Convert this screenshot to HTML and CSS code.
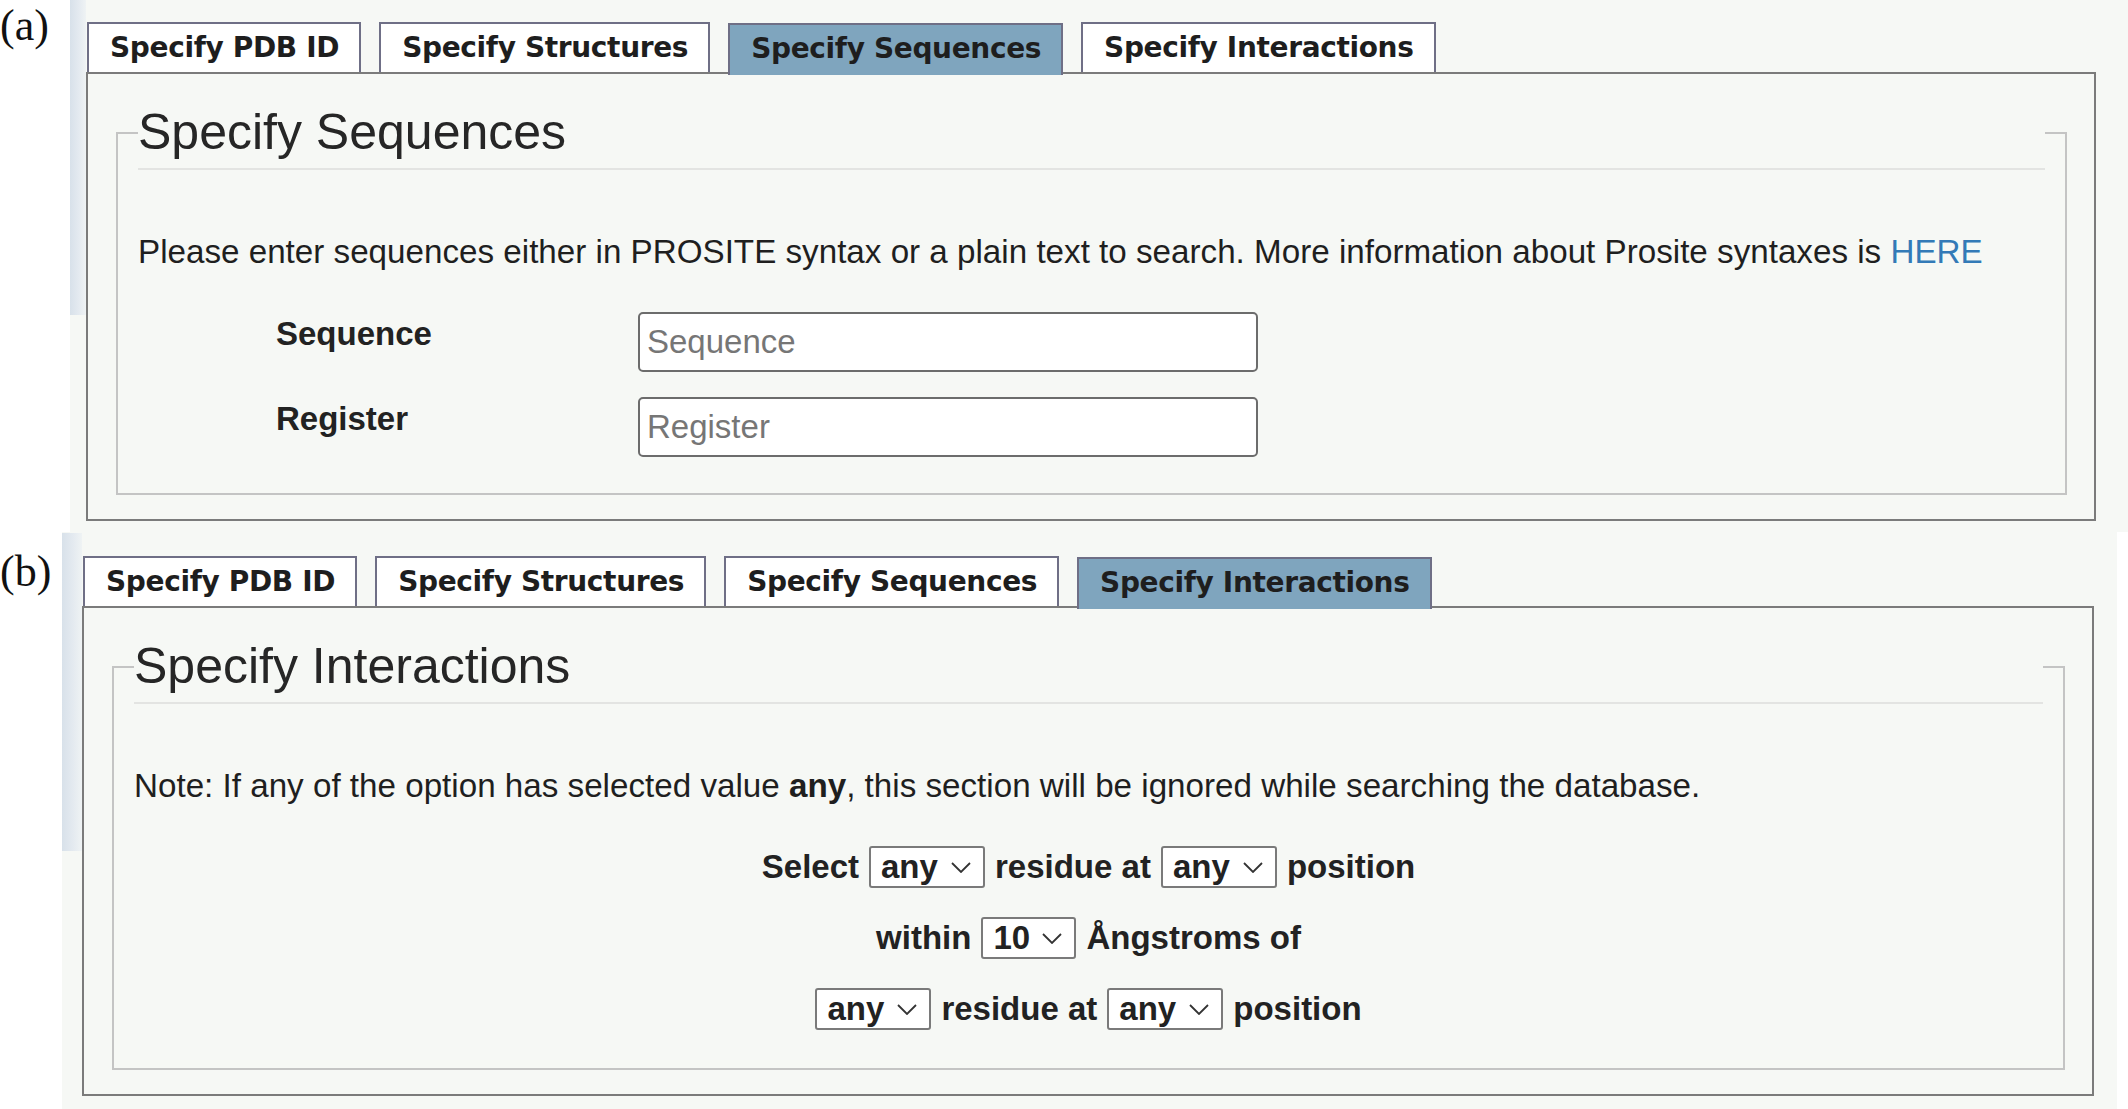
FILE: index.html
```html
<!DOCTYPE html>
<html lang="en">
<head>
<meta charset="utf-8">
<title>Specify Sequences / Specify Interactions</title>
<link rel="stylesheet" href="styles.css">
</head>
<body>
<div class="figure">
  <section class="fig-row fig-a">
    <div class="fig-label">(a)</div>
    <div class="shot">
      <div class="strip"></div>
      <div class="app">
        <ul class="tabs">
          <li class="tab">Specify PDB ID</li>
          <li class="tab">Specify Structures</li>
          <li class="tab active">Specify Sequences</li>
          <li class="tab">Specify Interactions</li>
        </ul>
        <div class="panel">
          <fieldset>
            <legend>Specify Sequences</legend>
            <p class="intro">Please enter sequences either in PROSITE syntax or a plain text to search. More information about Prosite syntaxes is <a href="#">HERE</a></p>
            <div class="form-grid">
              <label class="flabel" for="seq">Sequence</label>
              <input class="finput" id="seq" type="text" placeholder="Sequence">
              <label class="flabel" for="reg">Register</label>
              <input class="finput" id="reg" type="text" placeholder="Register">
            </div>
          </fieldset>
        </div>
      </div>
    </div>
  </section>

  <section class="fig-row fig-b">
    <div class="fig-label">(b)</div>
    <div class="shot">
      <div class="strip"></div>
      <div class="app">
        <ul class="tabs">
          <li class="tab">Specify PDB ID</li>
          <li class="tab">Specify Structures</li>
          <li class="tab">Specify Sequences</li>
          <li class="tab active">Specify Interactions</li>
        </ul>
        <div class="panel">
          <fieldset>
            <legend>Specify Interactions</legend>
            <p class="intro">Note: If any of the option has selected value <b>any</b>, this section will be ignored while searching the database.</p>
            <div class="irows">
              <div class="irow">
                <span>Select</span>
                <span class="sel"><select class="w-any"><option>any</option><option>ALA</option><option>ARG</option><option>ASN</option><option>ASP</option><option>CYS</option></select><svg class="chev" viewBox="0 0 20 11"><path d="M1 1 L10 10 L19 1"/></svg></span>
                <span>residue at</span>
                <span class="sel"><select class="w-any"><option>any</option><option>1</option><option>2</option><option>3</option></select><svg class="chev" viewBox="0 0 20 11"><path d="M1 1 L10 10 L19 1"/></svg></span>
                <span>position</span>
              </div>
              <div class="irow">
                <span>within</span>
                <span class="sel"><select class="w-num"><option>10</option><option>5</option><option>8</option><option>12</option></select><svg class="chev" viewBox="0 0 20 11"><path d="M1 1 L10 10 L19 1"/></svg></span>
                <span>Ångstroms of</span>
              </div>
              <div class="irow">
                <span class="sel"><select class="w-any"><option>any</option><option>ALA</option><option>ARG</option><option>ASN</option><option>ASP</option><option>CYS</option></select><svg class="chev" viewBox="0 0 20 11"><path d="M1 1 L10 10 L19 1"/></svg></span>
                <span>residue at</span>
                <span class="sel"><select class="w-any"><option>any</option><option>1</option><option>2</option><option>3</option></select><svg class="chev" viewBox="0 0 20 11"><path d="M1 1 L10 10 L19 1"/></svg></span>
                <span>position</span>
              </div>
            </div>
          </fieldset>
        </div>
      </div>
    </div>
  </section>
</div>
</body>
</html>
```

FILE: styles.css
```css
* { box-sizing: border-box; }

html, body {
  margin: 0;
  padding: 0;
  background: #ffffff;
}

body {
  width: 2128px;
  height: 1109px;
  overflow: hidden;
  font-family: "Liberation Sans", Arial, sans-serif;
  color: #222;
}

.figure {
  display: flex;
  flex-direction: column;
}

.fig-row {
  display: flex;
  align-items: flex-start;
}

.fig-a { height: 532px; }
.fig-b { height: 577px; }

.fig-label {
  font-family: "Liberation Serif", "Times New Roman", serif;
  font-size: 44px;
  line-height: 44px;
  color: #111;
  flex: none;
}

.fig-a .fig-label { width: 70px; padding-top: 4px; }
.fig-b .fig-label { width: 62px; padding-top: 18px; }

.shot {
  display: flex;
  align-items: flex-start;
  background: #f6f8f5;
  height: 100%;
}

.fig-a .shot { width: 2058px; }
.fig-b .shot { width: 2055px; }

.strip {
  flex: none;
  background: linear-gradient(to right, #d8e1ea 0%, #e4eaf0 55%, #eff3f4 100%);
}

.fig-a .strip { width: 16px; height: 315px; }
.fig-b .strip { width: 20px; height: 318px; margin-top: 1px; }

.app { flex: none; }
.fig-a .app { width: 2010px; padding-top: 22px; }
.fig-b .app { width: 2012px; padding-top: 24px; }

/* Tabs */
.tabs {
  list-style: none;
  margin: 0 0 0 1px;
  padding: 0;
  display: flex;
  align-items: flex-end;
  gap: 18px;
  height: 50px;
}

.tab {
  height: 50px;
  padding: 0 20px 0 21px;
  border: 2px solid #6f6f86;
  border-bottom: 0;
  background: #ffffff;
  font-family: "DejaVu Sans", Verdana, sans-serif;
  font-weight: bold;
  font-size: 28px;
  letter-spacing: -0.35px;
  line-height: 48px;
  color: #1e1e1e;
  white-space: nowrap;
}

.tab.active {
  height: 52px;
  margin-bottom: -3px;
  background: #7fa5be;
  position: relative;
  z-index: 1;
}

/* Panel */
.panel {
  border: 2px solid #7b7b7b;
  padding: 22px 27px 24px 28px;
}

fieldset {
  margin: 0;
  min-width: 0;
  border: 2px solid #c4c4c4;
  padding: 0 20px 36px;
}

legend {
  display: block;
  width: 100%;
  padding: 0;
  margin: 0;
  font-size: 50px;
  line-height: 72px;
  color: #262626;
  border-bottom: 2px solid #e3e4e2;
}

.intro {
  margin: 58px 0 0;
  font-size: 33.2px;
  line-height: 47px;
  color: #1f1f1f;
}

.intro b { font-weight: bold; }

.intro a {
  color: #337ab7;
  text-decoration: none;
}

/* Form (a) */
.form-grid {
  margin-top: 37px;
  padding-left: 138px;
  display: grid;
  grid-template-columns: 362px 620px;
  row-gap: 25px;
}

.flabel {
  font-size: 33px;
  font-weight: bold;
  line-height: 43px;
  color: #222;
}

.finput {
  width: 620px;
  height: 60px;
  border: 2px solid #6c6c6c;
  border-radius: 5px;
  background: #ffffff;
  padding: 0 7px;
  font-family: "Liberation Sans", Arial, sans-serif;
  font-size: 33px;
  color: #222;
}

.finput::placeholder { color: #767676; }

/* Interaction rows (b) */
.irows {
  margin-top: 37px;
  display: flex;
  flex-direction: column;
  gap: 29px;
  padding-bottom: 2px;
}

.irow {
  display: flex;
  justify-content: center;
  align-items: center;
  gap: 10px;
  height: 42px;
  font-size: 33px;
  font-weight: bold;
  line-height: 42px;
  color: #222;
}

.sel {
  position: relative;
  display: inline-block;
  height: 42px;
}

.sel select {
  -webkit-appearance: none;
  appearance: none;
  height: 42px;
  border: 2px solid #7a7a7a;
  border-radius: 3px;
  background: #ffffff;
  padding: 0 0 0 10px;
  font-family: "Liberation Sans", Arial, sans-serif;
  font-size: 33px;
  font-weight: bold;
  line-height: 38px;
  color: #222;
  display: block;
}

.sel select.w-any { width: 116px; }
.sel select.w-num { width: 95px; }

.chev {
  position: absolute;
  right: 14px;
  top: 50%;
  width: 20px;
  height: 11px;
  margin-top: -5px;
  pointer-events: none;
}

.chev path {
  fill: none;
  stroke: #333;
  stroke-width: 1.8;
}
```
